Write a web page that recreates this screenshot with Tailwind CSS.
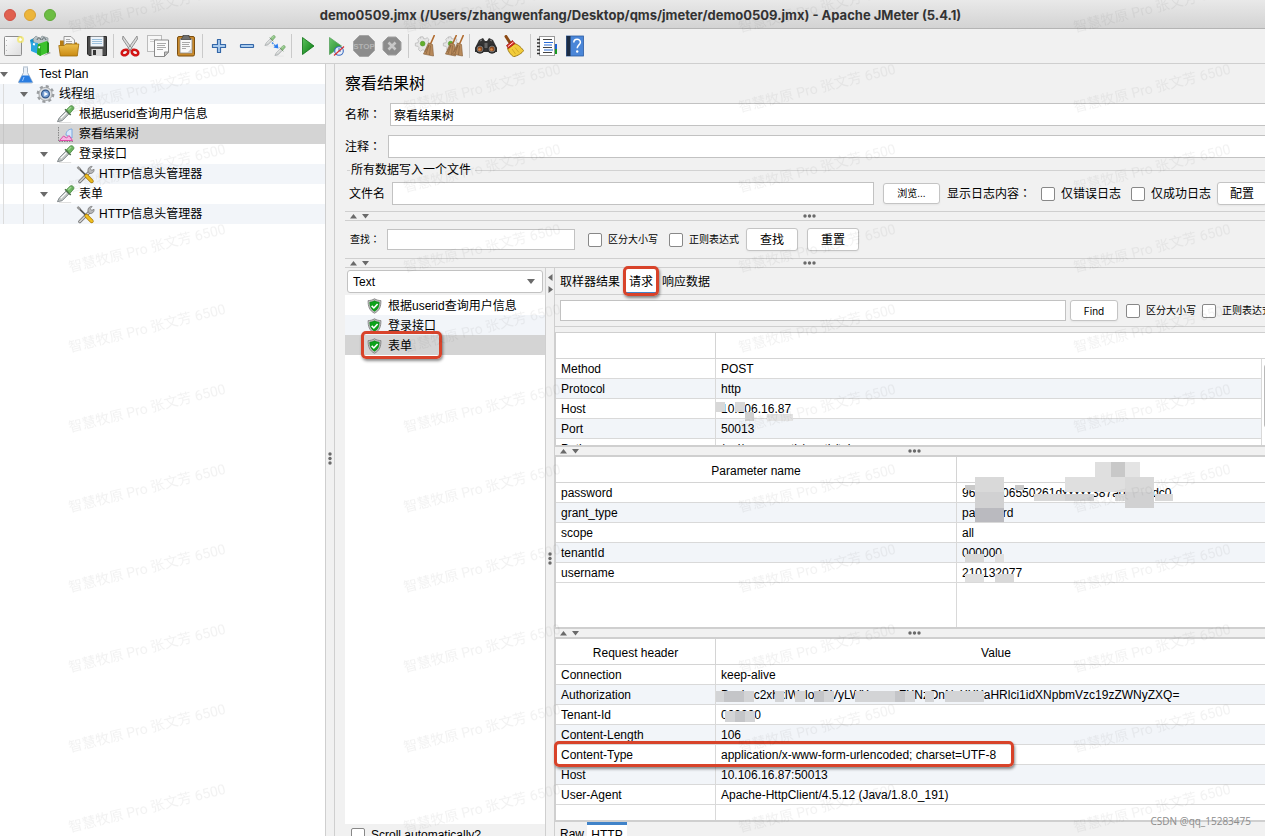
<!DOCTYPE html>
<html lang="zh-CN">
<head>
<meta charset="utf-8">
<title>demo0509.jmx - Apache JMeter (5.4.1)</title>
<script src="https://cdn.jsdelivr.net/npm/@tailwindcss/browser@4"></script>
</head>
<body class="relative flex h-screen flex-col overflow-hidden bg-[#f1f1f1] font-['Liberation_Sans','Noto_Sans_CJK_SC',sans-serif] text-xs leading-5 text-black">

<svg class="absolute size-0" aria-hidden="true">
  <defs>
    <linearGradient id="gold" x1="0" y1="0" x2="0" y2="1"><stop offset="0" stop-color="#eec04d"/><stop offset="1" stop-color="#c98a12"/></linearGradient>
    <linearGradient id="grn" x1="0" y1="0" x2="1" y2="1"><stop offset="0" stop-color="#5cc25c"/><stop offset="1" stop-color="#067a10"/></linearGradient>
    <linearGradient id="paper" x1="0" y1="0" x2="1" y2="1"><stop offset="0" stop-color="#ffffff"/><stop offset="1" stop-color="#dcdcdc"/></linearGradient>
  </defs>
  <symbol id="pipette" viewBox="0 0 20 20">
    <path d="M3 18.500h13" stroke="#dcdcdc" stroke-width="1"/>
    <path d="M1.500 17.500l2-4 7-7 3 3-7 7z" fill="#c2c7c5" stroke="#80868a" stroke-width="1"/>
    <path d="M5 14l6-6" stroke="#fff" stroke-width="1.200"/>
    <path d="M9.500 4.500l6 6" stroke="#4a6b46" stroke-width="1.600"/>
    <path d="M11 5l4-4c1.800-1.200 4.800 1 3.600 3.200L14.500 9z" fill="#6db560" stroke="#44843c" stroke-width=".8"/>
    <path d="M13 5l3-3" stroke="#a9dca0" stroke-width="1.200"/>
  </symbol>
  <symbol id="tools" viewBox="0 0 20 20">
    <path d="M4 17.500L14.500 7" stroke="#6b6b6b" stroke-width="3.400" stroke-linecap="round"/>
    <path d="M4 17.500L14.500 7" stroke="#cfcfcf" stroke-width="1.800" stroke-linecap="round"/>
    <path d="M13 7.500c-1.500-3 1-6.500 4-6l-2 2.300 1.500 1.900 2.500-1.200c.5 3-2.500 5.200-5 4.200z" fill="#b9b9b9" stroke="#666" stroke-width=".7"/>
    <path d="M2 2.500l8 8" stroke="#555" stroke-width="1.800"/><path d="M1.500 2l3 2.600" stroke="#999" stroke-width="2.600"/>
    <path d="M11 11.500l5.500 5.500" stroke="#a97800" stroke-width="4.200" stroke-linecap="round"/>
    <path d="M11 11.500l5.500 5.500" stroke="#f0c022" stroke-width="2.800" stroke-linecap="round"/>
  </symbol>
  <symbol id="shield" viewBox="0 0 16 17">
    <path d="M8 .8c2.300 1.400 4.300 1.900 6.800 1.900.2 6-1.300 10.800-6.800 13.500C2.500 13.500 1 8.700 1.200 2.700 3.700 2.700 5.700 2.200 8 .8z" fill="#c3c3c3" stroke="#7c7c7c" stroke-width=".9"/>
    <path d="M8 3c1.700.9 3.200 1.300 5 1.400 0 4.300-1.200 7.600-5 9.700-3.800-2.100-5-5.400-5-9.700C4.800 4.300 6.300 3.900 8 3z" fill="#0da31b" stroke="#087412" stroke-width=".6"/>
    <path d="M5 8.300l2.300 2.300 4-4.300" fill="none" stroke="#fff" stroke-width="1.700"/>
  </symbol>
  <symbol id="down" viewBox="0 0 8 5"><path d="M0 0h8L4 5z" fill="#6a6a6a"/></symbol>
  <symbol id="updown" viewBox="0 0 20 6"><path d="M0 5.500h7L3.500 1zM12 1h7l-3.500 4.500z" fill="#6a6a6a"/></symbol>
  <symbol id="dots" viewBox="0 0 13 4"><circle cx="2" cy="2" r="1.700" fill="#6a6a6a"/><circle cx="6.500" cy="2" r="1.700" fill="#6a6a6a"/><circle cx="11" cy="2" r="1.700" fill="#6a6a6a"/></symbol>
  <symbol id="vdots" viewBox="0 0 4 13"><circle cx="2" cy="2" r="1.700" fill="#6a6a6a"/><circle cx="2" cy="6.500" r="1.700" fill="#6a6a6a"/><circle cx="2" cy="11" r="1.700" fill="#6a6a6a"/></symbol>
  <symbol id="gearwhite" viewBox="0 0 22 22">
    <path d="M7 2h3l.5 2 2 .2 2-1.200 2 2-1 2 1 2 2 .500v3l-2 .500-1 2v3l-3 .500-1-2H9l-2 1.500-2-2 .5-2-1-1.500-3-.5v-3l3-.5.500-2-1-1.500 2-2 1.500.5z" fill="#e6e6e6" stroke="#b5b5b5" stroke-width=".8"/>
    <circle cx="9.500" cy="9.500" r="2.600" fill="#62b02c" stroke="#3f8a18" stroke-width=".6"/>
  </symbol>
  <symbol id="broomhead" viewBox="0 0 12 22">
    <path d="M11.500 0L7.500 9" stroke="#b06a2c" stroke-width="1.600"/>
    <path d="M5.500 8l4 1.500 1 11.500-10-2z" fill="#b98a5a" stroke="#8d6540" stroke-width=".7"/>
    <path d="M6 10L3 19M7.500 10.500L6.500 20M6 10l-4 7" stroke="#7e5a38" stroke-width=".6"/>
  </symbol>
</svg>

<!-- Window title -->
<header class="relative flex h-[29px] shrink-0 items-center justify-center border-b border-[#b4b4b4] bg-linear-to-b from-[#e9e9e9] to-[#d3d3d3]">
  <div class="absolute left-1 top-[9px] flex gap-2">
    <button aria-label="关闭" class="size-3 rounded-full border border-[#cf5145] bg-[#e0604f]"></button>
    <button aria-label="最小化" class="size-3 rounded-full border border-[#d9a032] bg-[#ecb53a]"></button>
    <button aria-label="缩放" class="size-3 rounded-full border border-[#5fa838] bg-[#6cbd43]"></button>
  </div>
  <h1 class="whitespace-nowrap pl-4 pt-0.5 font-['Inter'] text-[13px] font-bold text-[#333]">demo0509.jmx (/Users/zhangwenfang/Desktop/qms/jmeter/demo0509.jmx) - Apache JMeter (5.4.1)</h1>
</header>

<!-- Toolbar -->
<nav class="-ml-px flex h-[35px] shrink-0 items-center border-b border-[#cfcfcf]">
  <button aria-label="新建" class="flex w-7 justify-center"><svg width="22" height="22" viewBox="0 0 22 22"><rect x="2.500" y="1.500" width="17" height="19" rx="1" fill="url(#paper)" stroke="#8d8d8d"/><path d="M4.500 5v13" stroke="#bbb" stroke-dasharray="1 4"/><circle cx="18.500" cy="4.500" r="3.500" fill="#f4e96a" opacity=".8"/><circle cx="18.500" cy="4.500" r="1.500" fill="#fffef0"/></svg></button>
  <button aria-label="模板" class="flex w-7 justify-center"><svg width="24" height="24" viewBox="0 0 24 24"><path d="M1 6l6-3v15l-4-2z" fill="#1594cf"/><path d="M4 5l3-3 4 3 2-3 6 2v8H6z" fill="#b9c3c6" stroke="#7e8a8d" stroke-width=".6"/><path d="M8 6c1-3 3-3 4 0M13 6c1-3 3-3 4 0" fill="none" stroke="#5c6668"/><path d="M2 8l7 1v11l-7-3z" fill="#2aa6e0"/><path d="M4 10l2 .5" stroke="#fff" stroke-width="2"/><path d="M9 10l9-3v12l-7 3-3-2z" fill="#3cc22d"/><path d="M18 7l2 2v10l-2 1z" fill="#1f8a18"/><path d="M9 10l3 1v11l-4-2z" fill="#2ca822"/><path d="M9.500 13l1.500.5" stroke="#fff" stroke-width="2"/><path d="M20 18l2 1-8 3" fill="#9a9a9a"/></svg></button>
  <button aria-label="打开" class="flex w-7 justify-center"><svg width="22" height="22" viewBox="0 0 22 22"><path d="M2 5.500h6l2 2h9v12H2z" fill="#b67b12"/><path d="M6 1.500h7l3.500 3.500v8H6z" fill="#f6f6f6" stroke="#8f8f8f" stroke-width=".9"/><path d="M8 4.500h4M8 6.500h6M8 8.500h6" stroke="#aaa"/><path d="M.800 10.500h5.500l1.500-1.500h13l-1.500 12H2.300z" fill="url(#gold)" stroke="#a06c08" stroke-width=".8"/></svg></button>
  <button aria-label="保存" class="flex w-7 justify-center"><svg width="22" height="22" viewBox="0 0 22 22"><path d="M1.500 1.500h19v19H3l-1.500-1.500z" fill="#4c4c4c" stroke="#2c2c2c"/><rect x="4.500" y="1.500" width="13" height="10" fill="#eef4fa"/><path d="M6 4.500h10M6 6.500h10M6 8.500h10" stroke="#9cc0dc"/><rect x="5.500" y="14" width="11" height="7" fill="#d8d8d8"/><rect x="7" y="15" width="3" height="5" fill="#333"/></svg></button>
  <span class="mx-0.5 h-6 w-px bg-[#cacaca]"></span>
  <button aria-label="剪切" class="flex w-7 justify-center"><svg width="22" height="22" viewBox="0 0 22 22"><path d="M4 1l10 14-2.500 1L3.500 4zM18 1L8 15l2.500 1L18.500 4z" fill="#d9d9d9" stroke="#808080" stroke-width=".8"/><ellipse cx="6" cy="17.500" rx="3.400" ry="2.600" fill="none" stroke="#d21414" stroke-width="2.600" transform="rotate(-25 6 17.500)"/><ellipse cx="16" cy="17.500" rx="3.400" ry="2.600" fill="none" stroke="#d21414" stroke-width="2.600" transform="rotate(25 16 17.500)"/></svg></button>
  <button aria-label="复制" class="flex w-7 justify-center"><svg width="22" height="22" viewBox="0 0 22 22"><rect x=".5" y=".5" width="14" height="16" fill="#f7f7f7" stroke="#bcbcbc"/><path d="M3 4.500h8M3 6.500h4" stroke="#ccc"/><path d="M7.500 5h14v12l-4 4.500h-10z" fill="#fbfbfb" stroke="#8a8a8a"/><path d="M10 8.500h9M10 10.500h8M10 12.500h9M10 14.500h6" stroke="#aaa"/><path d="M21.500 17h-4v4.500z" fill="#c8c8c8" stroke="#8a8a8a"/></svg></button>
  <button aria-label="粘贴" class="flex w-7 justify-center"><svg width="22" height="22" viewBox="0 0 22 22"><rect x="2.500" y="1.500" width="17" height="19.500" rx="1.500" fill="#c9892a" stroke="#7c4f10"/><path d="M5 4h12v14H5z" fill="#fafafa" stroke="#8a8a8a" stroke-width=".8"/><path d="M8 0h6v1.500l2 3H6l2-3z" fill="#6f6f6f" stroke="#444" stroke-width=".7"/><path d="M7 7.500h8M7 9.500h7M7 11.500h8M7 13.500h4" stroke="#aaa"/><path d="M17 13v5h-5z" fill="#c4c4c4"/></svg></button>
  <span class="mx-0.5 h-6 w-px bg-[#cacaca]"></span>
  <button aria-label="全部展开" class="flex w-7 justify-center"><svg width="22" height="22" viewBox="0 0 22 22"><path d="M9.500 4.500h3v5h5v3h-5v5h-3v-5h-5v-3h5z" fill="#a9cbee" stroke="#3467a8" stroke-width="1.200" stroke-linejoin="round"/></svg></button>
  <button aria-label="全部折叠" class="flex w-7 justify-center"><svg width="22" height="22" viewBox="0 0 22 22"><rect x="4.500" y="9.500" width="13" height="3" rx=".5" fill="#a9cbee" stroke="#3467a8" stroke-width="1.200"/></svg></button>
  <button aria-label="切换" class="flex w-7 justify-center"><svg width="22" height="22" viewBox="0 0 22 22"><g opacity=".75"><use href="#pipette" width="12" height="12"/><use href="#pipette" x="10" y="10" width="12" height="12"/></g><path d="M8 7.500l3.500 3.500" stroke="#4a90e8" stroke-width="1.500" stroke-dasharray="2 1"/><path d="M14.500 13.500l-5-1 4-4z" fill="#2a7cf0"/></svg></button>
  <span class="mx-0.5 h-6 w-px bg-[#cacaca]"></span>
  <button aria-label="启动" class="flex w-7 justify-center"><svg width="22" height="22" viewBox="0 0 22 22"><path d="M5.500 2.500L17 11 5.500 19.500z" fill="url(#grn)" stroke="#0a6e12" stroke-width=".8"/></svg></button>
  <button aria-label="不停顿开始" class="flex w-7 justify-center"><svg width="22" height="22" viewBox="0 0 22 22"><path d="M4.500 2.500L16.500 11 4.500 19.500z" fill="url(#grn)" stroke="#4a9a50" stroke-width=".8" opacity=".9"/><circle cx="14" cy="16" r="4.300" fill="#e8eef8" stroke="#3a6cc0" stroke-width="1.100"/><path d="M14 16v-3M14 16h2" stroke="#3a6cc0"/><path d="M9 20.500l10-9" stroke="#d83434" stroke-width="1.200"/></svg></button>
  <button aria-label="停止" class="flex w-7 justify-center"><svg width="22" height="22" viewBox="0 0 22 22"><path d="M6.500.5h9l6 6v9l-6 6h-9l-6-6v-9z" fill="#8c8c8c" stroke="#a6a6a6"/><text x="11" y="14" text-anchor="middle" class="text-[8px] font-bold" fill="#b4b4b4">STOP</text></svg></button>
  <button aria-label="关闭测试" class="flex w-7 justify-center"><svg width="20" height="20" viewBox="0 0 20 20"><path d="M6 1h8l5 5v8l-5 5H6l-5-5V6z" fill="#8c8c8c" stroke="#a0a0a0"/><path d="M6.500 6.500l7 7M13.500 6.500l-7 7" stroke="#c8c8c8" stroke-width="2.600"/></svg></button>
  <span class="mx-0.5 h-6 w-px bg-[#cacaca]"></span>
  <button aria-label="清除" class="flex w-7 justify-center"><svg width="22" height="22" viewBox="0 0 22 22"><use href="#gearwhite" width="20" height="20"/><use href="#broomhead" x="9" width="12" height="22"/></svg></button>
  <button aria-label="清除全部" class="flex w-7 justify-center"><svg width="22" height="22" viewBox="0 0 22 22"><use href="#gearwhite" width="20" height="20"/><use href="#broomhead" x="3" width="12" height="22"/><use href="#broomhead" x="10" width="12" height="22"/></svg></button>
  <span class="mx-0.5 h-6 w-px bg-[#cacaca]"></span>
  <button aria-label="查找" class="flex w-7 justify-center"><svg width="24" height="22" viewBox="0 0 24 22"><path d="M5 5l4-2 2 3h2l2-3 4 2 4 8v4H1v-4z" fill="#333"/><path d="M6 6l2-1M18 6l-2-1" stroke="#888"/><circle cx="6" cy="14" r="4.700" fill="#2b2b2b"/><circle cx="18" cy="14" r="4.700" fill="#2b2b2b"/><circle cx="6" cy="14" r="2.900" fill="#8d4a1d" stroke="#777"/><circle cx="18" cy="14" r="2.900" fill="#8d4a1d" stroke="#777"/><circle cx="5.500" cy="14.500" r="1.300" fill="#d98a4c"/><circle cx="17.500" cy="14.500" r="1.300" fill="#d98a4c"/><rect x="10.500" y="8" width="3" height="5" fill="#666"/></svg></button>
  <button aria-label="重置查找" class="flex w-7 justify-center"><svg width="24" height="22" viewBox="0 0 24 22"><path d="M4 1.500l3.500 5.500" stroke="#8c4a14" stroke-width="3" stroke-linecap="round"/><path d="M11 8.500c4 0 7.500 3 10.500 7-1 2.500-6 5.500-10 6.200-3-2-5.500-5.500-6-8.700z" fill="#f2cc3a" stroke="#9a7410" stroke-width=".9"/><path d="M10 14l3.500 5M13 12.500l4 5" stroke="#c9a024" stroke-width=".8"/><path d="M4.500 10.500l6-5 2.500 3-6.500 5z" fill="#d9281e" stroke="#8e1a12" stroke-width=".7"/><path d="M6 11.500l5.500-4.500" stroke="#fff" stroke-width=".9"/></svg></button>
  <span class="mx-0.5 h-6 w-px bg-[#cacaca]"></span>
  <button aria-label="函数助手" class="flex w-7 justify-center"><svg width="22" height="22" viewBox="0 0 22 22"><rect x="3.500" y="1.500" width="15" height="19" fill="#fff" stroke="#9a9a9a"/><rect x="19" y="9" width="2" height="5" fill="#1a62d6"/><rect x="19" y="14" width="2" height="5" fill="#179a22"/><path d="M7 4.500h9M7 12.500h9M7 17.500h9" stroke="#444"/><path d="M8 7.500h9M8 10h8M8 15h9" stroke="#2a6cd6"/><path d="M1 4.500h3M1 8h3M1 11.500h3M1 15h3M1 18.500h3" stroke="#333" stroke-width="1.600"/></svg></button>
  <button aria-label="帮助" class="flex w-7 justify-center"><svg width="22" height="22" viewBox="0 0 22 22"><rect x="2.500" y="1" width="17" height="20" fill="#4a86d8" stroke="#2c5ca4" stroke-width=".8"/><rect x="2.500" y="1" width="4" height="20" fill="#1c2c44"/><path d="M9.800 7.500c0-4.300 6.600-4.300 6.600-.2 0 2.600-3.200 2.700-3.200 6" fill="none" stroke="#fff" stroke-width="1.500"/><circle cx="13.200" cy="16.500" r="1.200" fill="#fff"/></svg></button>
</nav>

<main class="flex min-h-0 flex-1">
  <!-- Test plan tree -->
  <aside class="w-[326px] shrink-0 border-r border-[#cfcfcf] bg-white">
    <ul>
      <li class="flex h-5 items-center"><svg class="w-2" height="5"><use href="#down"/></svg>
        <svg class="ml-2 mr-1 shrink-0" width="19" height="20" viewBox="0 0 19 20"><path d="M7 3h5M7.500 3.500v5l-5 9.500c0 1 .5 1 1 1h12c.5 0 1.500 0 1-1l-5-9.500v-5" fill="#e9f0f8" stroke="#a9b8c8"/><path d="M6 11.500h7l3.500 7h-14z" fill="#2a7de0"/><path d="M8 13l-1.500 4" stroke="#9cc8ff"/></svg>Test Plan</li>
      <li class="flex h-5 items-center bg-[#f2f5f9]"><span class="ml-[3px] h-5 w-px bg-[#dcdcdc]"></span><svg class="ml-4 w-2" height="5"><use href="#down"/></svg>
        <svg class="ml-2 mr-1 shrink-0" width="19" height="20" viewBox="0 0 19 20"><circle cx="9.500" cy="10" r="7.600" fill="none" stroke="#9a9da0" stroke-width="2.600" stroke-dasharray="3 2.970"/><circle cx="9.500" cy="10" r="6.600" fill="#dcdee0" stroke="#9c9fa2" stroke-width=".9"/><circle cx="9.500" cy="10" r="3.900" fill="#7ba3d6" stroke="#34588a" stroke-width="1.200"/><path d="M8.300 7.700L12 10l-3.700 2.300z" fill="#fff"/></svg>线程组</li>
      <li class="flex h-5 items-center"><span class="ml-[3px] h-5 w-px bg-[#dcdcdc]"></span><span class="ml-[19px] h-5 w-px bg-[#dcdcdc]"></span><svg class="ml-8 mr-1 shrink-0" width="19" height="19"><use href="#pipette"/></svg>根据userid查询用户信息</li>
      <li class="flex h-5 items-center bg-[#d4d4d4]"><span class="ml-[3px] h-5 w-px bg-[#c6c6c6]"></span><span class="ml-[19px] h-5 w-px bg-[#c6c6c6]"></span>
        <svg class="ml-8 mr-1 shrink-0" width="19" height="19" viewBox="0 0 19 19"><path d="M2.500 2v14.500H18" fill="none" stroke="#888" stroke-dasharray="1.500 1"/><path d="M10 10c0-4 3-6 6-6v9z" fill="#d7e8fb" stroke="#7aa8e0"/><path d="M3.500 15.500l4-4.500 3 2 2.500-2.500 3.500 5z" fill="#f7b3e2" stroke="#dc4ba8"/></svg>察看结果树</li>
      <li class="flex h-5 items-center"><span class="ml-[3px] h-5 w-px bg-[#dcdcdc]"></span><span class="ml-[19px] h-5 w-px bg-[#dcdcdc]"></span><svg class="ml-4 w-2" height="5"><use href="#down"/></svg><svg class="ml-2 mr-1 shrink-0" width="19" height="19"><use href="#pipette"/></svg>登录接口</li>
      <li class="flex h-5 items-center bg-[#f2f5f9]"><span class="ml-[3px] h-5 w-px bg-[#dcdcdc]"></span><span class="ml-[19px] h-5 w-px bg-[#dcdcdc]"></span><span class="ml-[19px] h-5 w-px bg-[#dcdcdc]"></span><svg class="ml-8 mr-1 shrink-0" width="19" height="19"><use href="#tools"/></svg>HTTP信息头管理器</li>
      <li class="flex h-5 items-center"><span class="ml-[3px] h-5 w-px bg-[#dcdcdc]"></span><span class="ml-[19px] h-5 w-px bg-[#dcdcdc]"></span><svg class="ml-4 w-2" height="5"><use href="#down"/></svg><svg class="ml-2 mr-1 shrink-0" width="19" height="19"><use href="#pipette"/></svg>表单</li>
      <li class="flex h-5 items-center bg-[#f2f5f9]"><span class="ml-[3px] h-5 w-px bg-[#dcdcdc]"></span><span class="ml-[19px] h-5 w-px bg-[#dcdcdc]"></span><span class="ml-[19px] h-5 w-px bg-[#dcdcdc]"></span><svg class="ml-8 mr-1 shrink-0" width="19" height="19"><use href="#tools"/></svg>HTTP信息头管理器</li>
    </ul>
  </aside>

  <div class="flex w-[9px] shrink-0 items-center justify-center border-r border-[#cfcfcf]"><svg class="mt-4" width="4" height="13"><use href="#vdots"/></svg></div>

  <!-- Listener panel; runs slightly past the window's right edge -->
  <section class="-mr-[11px] flex min-w-0 flex-1 flex-col pl-[10px]">
    <h2 class="flex h-[39px] shrink-0 items-center text-base">察看结果树</h2>
    <div class="flex h-[23px] shrink-0 items-center">
      <label for="name" class="w-[45px] shrink-0">名称<span class="font-['Noto_Sans_CJK_TC']" lang="zh-TW">：</span></label>
      <input id="name" value="察看结果树" class="h-[23px] min-w-0 flex-1 border border-[#c2c2c2] bg-white px-[3px] leading-5">
    </div>
    <div class="mt-[9px] flex h-[23px] shrink-0 items-center">
      <label for="comment" class="w-[43px] shrink-0">注释<span class="font-['Noto_Sans_CJK_TC']" lang="zh-TW">：</span></label>
      <input id="comment" class="h-[23px] min-w-0 flex-1 border border-[#c2c2c2] bg-white px-[3px]">
    </div>
    <div class="flex h-6 shrink-0 items-center pl-0.5"><span class="mr-px h-px w-[3px] bg-[#d2d2d2]"></span>所有数据写入一个文件<span class="ml-1 h-px flex-1 bg-[#d2d2d2]"></span></div>
    <div class="flex h-[23px] shrink-0 items-center whitespace-nowrap pl-1 pr-[9px]">
      <label for="file" class="mr-[7px]">文件名</label>
      <input id="file" class="h-[23px] min-w-0 flex-1 border border-[#c2c2c2] bg-white px-[3px]">
      <button class="ml-[9px] mr-[7px] h-[21px] w-[57px] rounded-[3px] border border-[#c4c4c4] bg-white text-[10px] leading-4 shadow-xs">浏览...</button>
      <span class="mr-[10px]">显示日志内容<span class="font-['Noto_Sans_CJK_TC']" lang="zh-TW">：</span></span>
      <label class="mr-[10px] flex items-center gap-1.5"><input type="checkbox" class="size-[14px] appearance-none rounded-xs border border-[#888] bg-white">仅错误日志</label>
      <label class="mr-1.5 flex items-center gap-1.5"><input type="checkbox" class="size-[14px] appearance-none rounded-xs border border-[#888] bg-white">仅成功日志</label>
      <button class="h-[23px] w-[50px] rounded-[3px] border border-[#c4c4c4] bg-white shadow-xs">配置</button>
    </div>

    <div class="mt-1.5 flex h-[10px] shrink-0 items-center border-y border-[#cfcfcf] pl-[5px]"><svg width="20" height="6"><use href="#updown"/></svg><span class="flex flex-1 justify-center pr-7"><svg width="13" height="4"><use href="#dots"/></svg></span></div>

    <div class="flex h-[37px] shrink-0 items-center whitespace-nowrap pl-[5px] text-[10px]">
      <label for="search" class="w-[37px]">查找<span class="font-['Noto_Sans_CJK_TC']" lang="zh-TW">：</span></label>
      <input id="search" class="h-[21px] w-[188px] border border-[#c2c2c2] bg-white px-[3px]">
      <label class="ml-[13px] flex items-center gap-1.5"><input type="checkbox" class="size-[14px] appearance-none rounded-xs border border-[#888] bg-white">区分大小写</label>
      <label class="ml-[11px] flex items-center gap-1.5"><input type="checkbox" class="size-[14px] appearance-none rounded-xs border border-[#888] bg-white">正则表达式</label>
      <button class="ml-[7px] h-[23px] w-[52px] rounded-[3px] border border-[#c4c4c4] bg-white text-xs shadow-xs">查找</button>
      <button class="ml-[9px] h-[23px] w-[52px] rounded-[3px] border border-[#c4c4c4] bg-white text-xs shadow-xs">重置</button>
    </div>

    <div class="flex h-[10px] shrink-0 items-center border-y border-[#cfcfcf] pl-[5px]"><svg width="20" height="6"><use href="#updown"/></svg><span class="flex flex-1 justify-center pr-7"><svg width="13" height="4"><use href="#dots"/></svg></span></div>

    <div class="flex min-h-0 flex-1">
      <!-- Sample results -->
      <div class="flex w-[201px] shrink-0 flex-col border-r border-[#cfcfcf]">
        <div class="relative mx-0.5 mb-0.5 mt-0.5 h-[23px] shrink-0">
          <select aria-label="渲染器" class="h-[23px] w-full appearance-none rounded-[3px] border border-[#c2c2c2] bg-white pl-[5px]"><option>Text</option></select>
          <svg class="pointer-events-none absolute right-2 top-[9px]" width="8" height="5"><use href="#down"/></svg>
        </div>
        <ul class="flex-1 bg-white">
          <li class="flex h-5 items-center gap-1.5 pl-[22px] pt-px"><svg width="15" height="16"><use href="#shield"/></svg>根据userid查询用户信息</li>
          <li class="flex h-5 items-center gap-1.5 bg-[#f2f5f9] pl-[22px] pt-px"><svg width="15" height="16"><use href="#shield"/></svg>登录接口</li>
          <li class="relative flex h-5 items-center gap-1.5 bg-[#d4d4d4] pl-[22px] pt-px"><svg width="15" height="16"><use href="#shield"/></svg>表单
            <span class="absolute -top-1 left-4 h-7 w-[81px] rounded-[5px] border-[3px] border-[#d8432a] shadow-[1px_2px_3px_rgba(0,0,0,0.45)]"></span></li>
        </ul>
        <label class="flex h-3 shrink-0 items-start gap-1.5 overflow-hidden pl-1.5 pt-[3px]"><input type="checkbox" class="mt-px size-[14px] shrink-0 appearance-none rounded-xs border border-[#888] bg-white"><span class="-mt-0.5">Scroll automatically?</span></label>
      </div>

      <div class="relative flex w-[9px] shrink-0 items-center justify-center border-r border-[#cfcfcf]">
        <svg class="absolute left-0.5 top-1.5" width="5" height="20" viewBox="0 0 5 20"><path d="M4.500 0v7L0 3.500zM.5 12v7L5 15.500z" fill="#6a6a6a"/></svg>
        <svg class="mt-3" width="4" height="13"><use href="#vdots"/></svg>
      </div>

      <!-- Request details -->
      <div class="flex min-w-0 flex-1 flex-col">
        <div role="tablist" class="flex h-[27px] shrink-0 gap-px border-b border-[#cfcfcf] pl-px">
          <button role="tab" class="px-1 pt-0.5">取样器结果</button>
          <button role="tab" aria-selected="true" class="relative -mb-px border-b-[3px] border-[#4083c9] bg-white px-1 pt-1">请求
            <span class="absolute -left-0.5 -top-0.5 h-[30px] w-9 rounded-[5px] border-[3px] border-[#d8432a] shadow-[1px_2px_3px_rgba(0,0,0,0.45)]"></span></button>
          <button role="tab" class="px-1 pt-0.5">响应数据</button>
        </div>
        <div class="flex h-8 shrink-0 items-center whitespace-nowrap border-b border-[#cfcfcf] pl-[5px] pr-1 text-[10px]">
          <input aria-label="Find" class="h-[21px] min-w-0 flex-1 border border-[#c2c2c2] bg-white px-[3px]">
          <button class="ml-1 h-[21px] w-12 rounded-[3px] border border-[#c4c4c4] bg-white font-['Inter'] text-[10px] leading-4 shadow-xs">Find</button>
          <label class="ml-2 flex items-center gap-1.5"><input type="checkbox" class="size-[14px] appearance-none rounded-xs border border-[#888] bg-white">区分大小写</label>
          <label class="ml-1.5 flex items-center gap-1.5"><input type="checkbox" class="size-[14px] appearance-none rounded-xs border border-[#888] bg-white">正则表达式</label>
        </div>

        <div class="relative mt-[5px] h-[115px] shrink-0 overflow-hidden border-b-2 border-l border-t border-[#cfcfcf] bg-white">
          <table class="w-full table-fixed border-separate border-spacing-0">
            <colgroup><col class="w-[160px]"><col><col class="w-[14px]"></colgroup>
            <thead><tr class="h-[26px]"><th class="border-b border-r border-[#d4d4d4] p-0"></th><th colspan="2" class="border-b border-[#d4d4d4] p-0"></th></tr></thead>
            <tbody>
              <tr class="h-5"><td class="border-b border-r border-[#d9d9d9] pb-0 pl-[5px] pt-0.5 leading-[17px]">Method</td><td class="border-b border-r border-[#d9d9d9] pb-0 pl-[5px] pt-0.5 leading-[17px]">POST</td><td rowspan="5" class="p-0 align-top"><div class="ml-0.5 mt-1 h-[66px] w-[9px] rounded-full bg-[#b9b9b9]"></div></td></tr>
              <tr class="h-5 bg-[#f2f5f9]"><td class="border-b border-r border-[#d9d9d9] pb-0 pl-[5px] pt-0.5 leading-[17px]">Protocol</td><td class="border-b border-r border-[#d9d9d9] pb-0 pl-[5px] pt-0.5 leading-[17px]">http</td></tr>
              <tr class="h-5"><td class="border-b border-r border-[#d9d9d9] pb-0 pl-[5px] pt-0.5 leading-[17px]">Host</td><td class="border-b border-r border-[#d9d9d9] pb-0 pl-[5px] pt-0.5 leading-[17px]">10.106.16.87</td></tr>
              <tr class="h-5 bg-[#f2f5f9]"><td class="border-b border-r border-[#d9d9d9] pb-0 pl-[5px] pt-0.5 leading-[17px]">Port</td><td class="border-b border-r border-[#d9d9d9] pb-0 pl-[5px] pt-0.5 leading-[17px]">50013</td></tr>
              <tr class="h-5"><td class="border-b border-r border-[#d9d9d9] pb-0 pl-[5px] pt-0.5 leading-[17px]">Path</td><td class="border-b border-r border-[#d9d9d9] pb-0 pl-[5px] pt-0.5 leading-[17px]">/api/xxxxx-auth/oauth/token</td></tr>
            </tbody>
          </table>
          <svg class="pointer-events-none absolute inset-0 size-full" aria-hidden="true"><path d="M160 69h9v10h-9zM179 69h10v10h-10z" fill="#d8d8d8"/><path d="M189 79h9v9h-9z" fill="#cfcfcf"/><path d="M211 81h26v7h-26z" fill="#e4e4e4"/></svg>
        </div>
        <div class="flex h-2 shrink-0 items-center pl-[5px]"><svg width="20" height="6"><use href="#updown"/></svg><span class="flex flex-1 justify-center pr-7"><svg width="13" height="4"><use href="#dots"/></svg></span></div>

        <div class="relative h-[174px] shrink-0 overflow-hidden border-y-2 border-l border-[#cfcfcf] bg-white">
          <table class="w-full table-fixed border-separate border-spacing-0">
            <colgroup><col class="w-[401px]"><col></colgroup>
            <thead><tr class="h-[26px]"><th class="border-b border-r border-[#d4d4d4] pb-0 pt-0.5 font-normal">Parameter name</th><th class="border-b border-[#d4d4d4] p-0"></th></tr></thead>
            <tbody>
              <tr class="h-5"><td class="border-b border-r border-[#d9d9d9] pb-0 pl-[5px] pt-0.5 leading-[17px]">password</td><td class="border-b border-[#d9d9d9] pb-0 pl-[5px] pt-0.5 leading-[17px]">96000006550261dxxxxx387a00000dc0</td></tr>
              <tr class="h-5 bg-[#f2f5f9]"><td class="border-b border-r border-[#d9d9d9] pb-0 pl-[5px] pt-0.5 leading-[17px]">grant_type</td><td class="border-b border-[#d9d9d9] pb-0 pl-[5px] pt-0.5 leading-[17px]">password</td></tr>
              <tr class="h-5"><td class="border-b border-r border-[#d9d9d9] pb-0 pl-[5px] pt-0.5 leading-[17px]">scope</td><td class="border-b border-[#d9d9d9] pb-0 pl-[5px] pt-0.5 leading-[17px]">all</td></tr>
              <tr class="h-5 bg-[#f2f5f9]"><td class="border-b border-r border-[#d9d9d9] pb-0 pl-[5px] pt-0.5 leading-[17px]">tenantId</td><td class="border-b border-[#d9d9d9] pb-0 pl-[5px] pt-0.5 leading-[17px]">000000</td></tr>
              <tr class="h-5"><td class="border-b border-r border-[#d9d9d9] pb-0 pl-[5px] pt-0.5 leading-[17px]">username</td><td class="border-b border-[#d9d9d9] pb-0 pl-[5px] pt-0.5 leading-[17px]">210132077</td></tr>
              <tr class="h-11"><td class="border-r border-[#d9d9d9] p-0"></td><td class="p-0"></td></tr>
            </tbody>
          </table>
          <svg class="pointer-events-none absolute inset-0 size-full" aria-hidden="true">
            <path d="M539 5h16v15h-16zM509 20h29v15h-29zM538 20h31v15h-31z" fill="#dfdfdf"/><path d="M555 5h14v15h-14z" fill="#c8c8c8"/><path d="M569 5h15v15h-15z" fill="#e4e4e4"/>
            <path d="M419 20h29v15h-29zM569 20h29v15h-29z" fill="#d9d9d9"/><path d="M419 35h29v16h-29zM509 37h29v7h-29zM569 35h29v16h-29z" fill="#d1d1d2"/><path d="M419 51h29v14h-29z" fill="#bababf"/>
            <path d="M409 28h10v5h-10zM459 28h9v5h-9z" fill="#c9c9c9"/><path d="M478 37h31v7h-31zM559 37h10v7h-10zM599 37h18v7h-18z" fill="#d9d9d9"/>
            <path d="M409 97h19v8h-19zM439 117h19v8h-19z" fill="#d9d9d9"/><path d="M439 97h9v8h-9zM409 117h19v8h-19z" fill="#e0e0e0"/>
          </svg>
        </div>
        <div class="flex h-2 shrink-0 items-center pl-[5px]"><svg width="20" height="6"><use href="#updown"/></svg><span class="flex flex-1 justify-center pr-7"><svg width="13" height="4"><use href="#dots"/></svg></span></div>

        <div class="relative h-[185px] shrink-0 border-y-2 border-l border-[#cfcfcf] bg-white">
          <table class="w-full table-fixed border-separate border-spacing-0">
            <colgroup><col class="w-[160px]"><col></colgroup>
            <thead><tr class="h-[26px]"><th class="border-b border-r border-[#d4d4d4] pb-0 pt-0.5 font-normal">Request header</th><th class="border-b border-[#d4d4d4] pb-0 pt-0.5 font-normal">Value</th></tr></thead>
            <tbody>
              <tr class="h-5"><td class="border-b border-r border-[#d9d9d9] pb-0 pl-[5px] pt-0.5 leading-[17px]">Connection</td><td class="border-b border-[#d9d9d9] pb-0 pl-[5px] pt-0.5 leading-[17px]">keep-alive</td></tr>
              <tr class="h-5 bg-[#f2f5f9]"><td class="border-b border-r border-[#d9d9d9] pb-0 pl-[5px] pt-0.5 leading-[17px]">Authorization</td><td class="border-b border-[#d9d9d9] pb-0 pl-[5px] pt-0.5 leading-[17px]">Basic c2xhxlWxlodGVyLWXxxxxxZXNzOnNxXXXaHRlci1idXNpbmVzc19zZWNyZXQ=</td></tr>
              <tr class="h-5"><td class="border-b border-r border-[#d9d9d9] pb-0 pl-[5px] pt-0.5 leading-[17px]">Tenant-Id</td><td class="border-b border-[#d9d9d9] pb-0 pl-[5px] pt-0.5 leading-[17px]">000000</td></tr>
              <tr class="h-5 bg-[#f2f5f9]"><td class="border-b border-r border-[#d9d9d9] pb-0 pl-[5px] pt-0.5 leading-[17px]">Content-Length</td><td class="border-b border-[#d9d9d9] pb-0 pl-[5px] pt-0.5 leading-[17px]">106</td></tr>
              <tr class="h-5"><td class="relative border-b border-r border-[#d9d9d9] pb-0 pl-[5px] pt-0.5 leading-[17px]">Content-Type<span class="absolute -left-0.5 -top-1 z-10 h-[26px] w-[460px] rounded-[5px] border-[3px] border-[#d8432a] shadow-[1px_2px_3px_rgba(0,0,0,0.45)]"></span></td><td class="border-b border-[#d9d9d9] pb-0 pl-[5px] pt-0.5 leading-[17px]">application/x-www-form-urlencoded; charset=UTF-8</td></tr>
              <tr class="h-5 bg-[#f2f5f9]"><td class="border-b border-r border-[#d9d9d9] pb-0 pl-[5px] pt-0.5 leading-[17px]">Host</td><td class="border-b border-[#d9d9d9] pb-0 pl-[5px] pt-0.5 leading-[17px]">10.106.16.87:50013</td></tr>
              <tr class="h-5"><td class="border-b border-r border-[#d9d9d9] pb-0 pl-[5px] pt-0.5 leading-[17px]">User-Agent</td><td class="border-b border-[#d9d9d9] pb-0 pl-[5px] pt-0.5 leading-[17px]">Apache-HttpClient/4.5.12 (Java/1.8.0_191)</td></tr>
              <tr class="h-[15px]"><td class="border-r border-[#d9d9d9] p-0"></td><td class="p-0"></td></tr>
            </tbody>
          </table>
          <svg class="pointer-events-none absolute inset-0 size-full" aria-hidden="true">
            <path d="M160 52h38v11h-38zM219 52h9v11h-9zM239 52h10v11h-10zM258 52h20v11h-20zM299 52h60v11h-60zM369 52h9v11h-9zM389 52h39v11h-39zM169 72h30v11h-30z" fill="#d3d4d6"/>
            <path d="M168 52h20v11h-20zM258 52h10v11h-10zM339 52h10v11h-10zM179 72h10v11h-10z" fill="#c4c5c8"/>
          </svg>
        </div>
        <div role="tablist" class="flex min-h-0 flex-1 items-start overflow-hidden pl-[5px]">
          <button role="tab" class="h-5 pr-[3px] pt-0.5">Raw</button>
          <button role="tab" aria-selected="true" class="h-6 w-10 border-t-[3px] border-[#4083c9] bg-white leading-[19px]">HTTP</button>
        </div>
      </div>
    </div>
  </section>
</main>

<!-- Screen watermark tiled over the whole window -->
<svg class="pointer-events-none absolute inset-0 z-20 size-full" aria-hidden="true">
  <defs><pattern id="wm" width="335" height="80" patternUnits="userSpaceOnUse" x="-20" y="48">
    <text x="167" y="45" text-anchor="middle" transform="rotate(-14 167 40)" class="font-['Roboto','Noto_Sans_CJK_SC',sans-serif] text-sm" fill="#000" fill-opacity=".05">智慧牧原 Pro 张文芳 6500</text>
  </pattern></defs>
  <rect width="100%" height="100%" fill="url(#wm)"/>
</svg>
<p class="pointer-events-none absolute bottom-[5px] right-[14px] z-20 font-['Open_Sans'] text-[10px] leading-5 text-[#8c8c8c]">CSDN @qq_15283475</p>
</body>
</html>
